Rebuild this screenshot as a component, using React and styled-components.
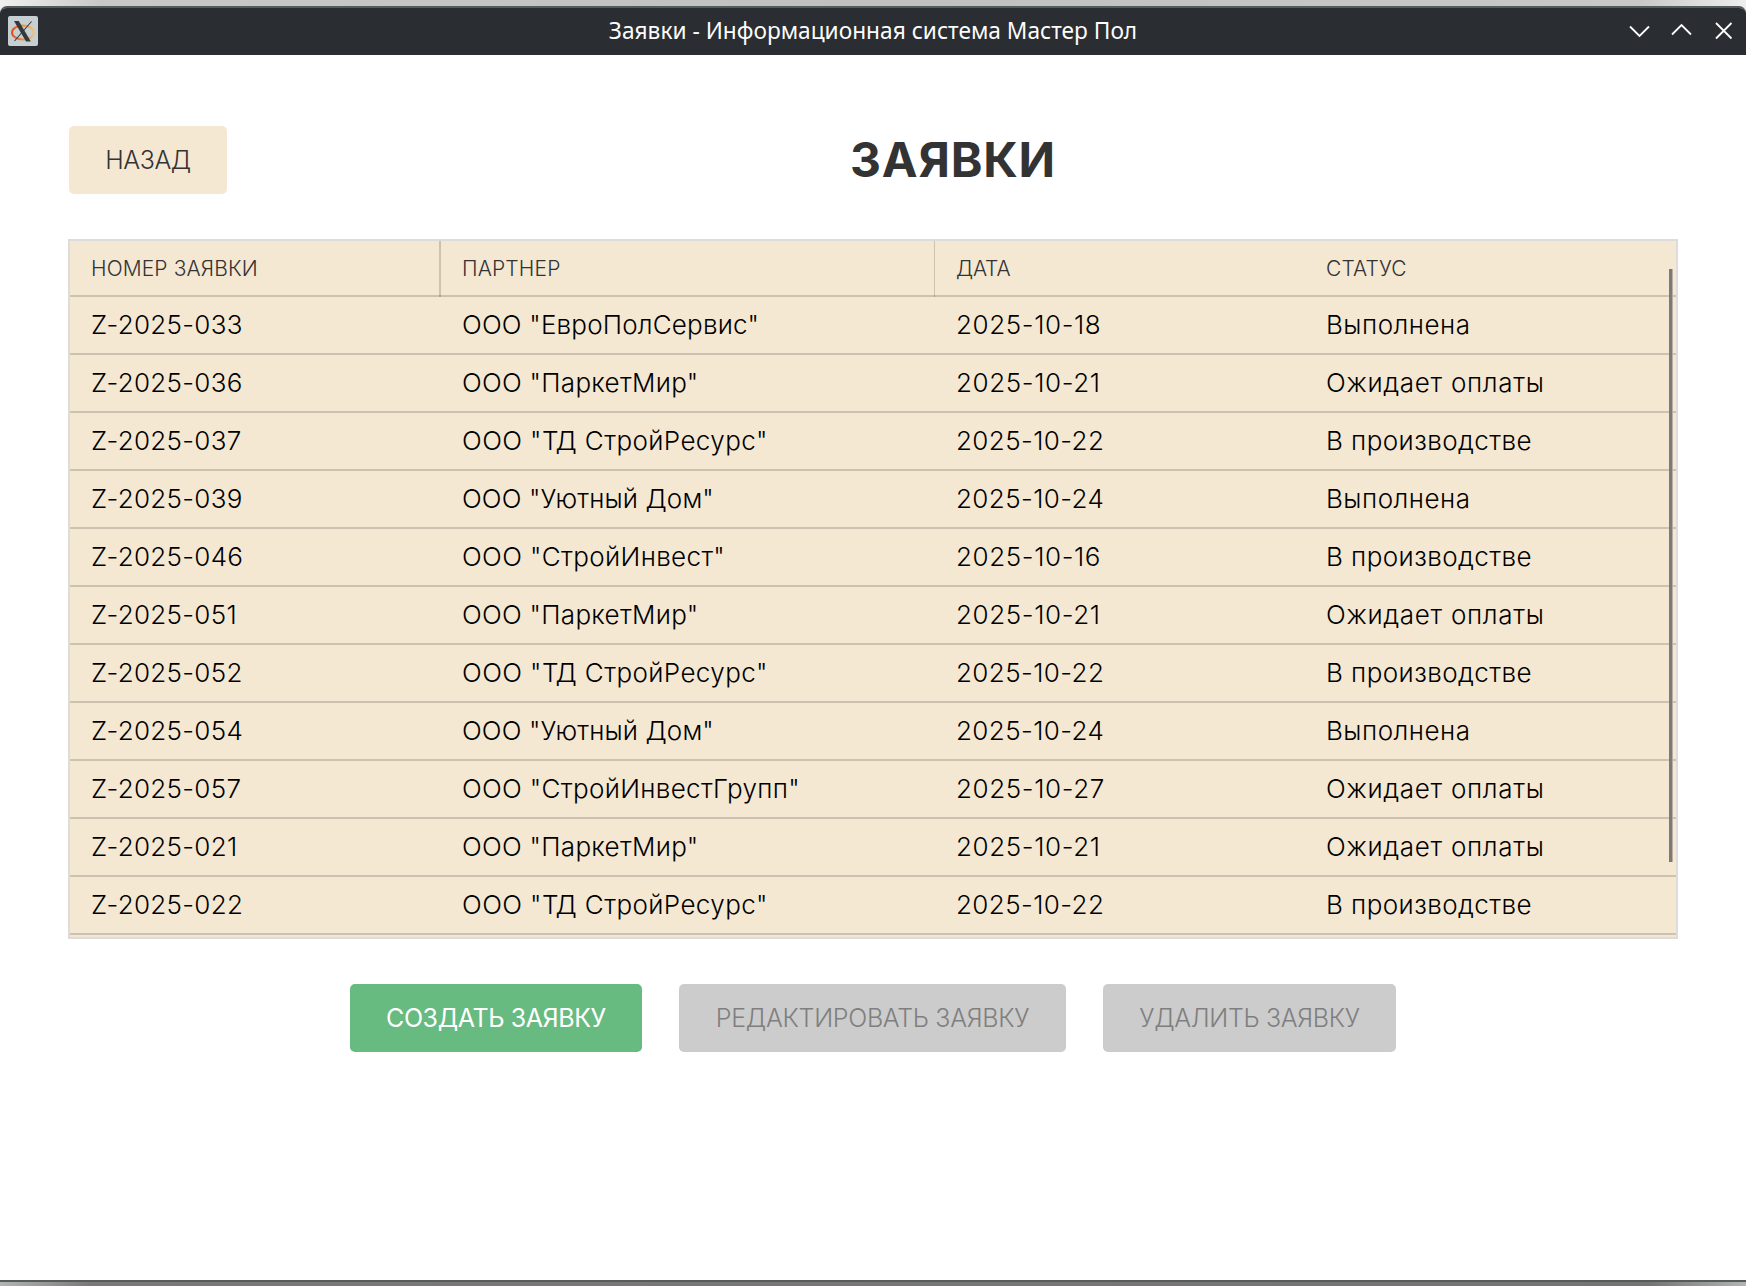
import React from 'react';
import styled, { createGlobalStyle } from 'styled-components';

const GlobalStyle = createGlobalStyle`
  * { box-sizing: border-box; }
  body { margin: 0; background: #bcbcbc; font-family: Inter, "Liberation Sans", sans-serif; }
`;

const Desktop = styled.div`
  width: 1746px;
  height: 1286px;
  padding: 6px 0 4px;
  overflow: hidden;
  background:
    linear-gradient(90deg, #b4b4b4 0, #7c7878 90px, #767373 1650px, #b4b4b4 100%) bottom / 100% 8px no-repeat,
    linear-gradient(90deg, #f0f0f0 0, #c8c8c8 100px, #c0c0c0 50%, #c8c8c8 1640px, #eeeeee 100%);
`;

const Window = styled.div`
  height: 1276px;
  display: flex;
  flex-direction: column;
  background: #fff;
  border-top: 2px solid #535b5d;
  border-bottom: 2px solid #535b5d;
  border-radius: 7px 7px 0 0;
  overflow: hidden;
`;

const TitleBar = styled.header`
  height: 47px;
  flex: none;
  display: grid;
  grid-template-columns: 140px 1fr 140px;
  align-items: center;
  background: #2a2d32;
  color: #fcfcfc;
`;

const AppIcon = styled.svg`
  margin: 0 0 2px 8px;
  width: 30px;
  height: 30px;
  display: block;
`;

const WindowTitle = styled.div`
  padding-bottom: 2px;
  text-align: center;
  font: 400 22.7px/30px "Noto Sans", sans-serif;
  white-space: nowrap;
`;

const WindowControls = styled.svg`
  width: 140px;
  height: 47px;
  display: block;
  fill: none;
  stroke: #fcfcfc;
  stroke-width: 1.8;
`;

const Content = styled.main`
  flex: 1;
  padding: 71px 68px 0;
  display: flex;
  flex-direction: column;
`;

const PageHead = styled.div`
  height: 68px;
  padding-left: 1px;
  display: flex;
  align-items: center;
`;

const Title = styled.h1`
  flex: 1;
  margin: 0;
  padding-left: 1px;
  text-align: center;
  font-size: 48px;
  line-height: 68px;
  font-weight: 700;
  letter-spacing: 0.8px;
  color: #333;
`;

const Button = styled.button`
  width: ${(p) => p.$width}px;
  height: 68px;
  padding: 0;
  border: 0;
  border-radius: 5px;
  font: ${(p) => p.$weight || 300} 25px/68px Inter, sans-serif;
  letter-spacing: ${(p) => p.$spacing || 0}px;
  white-space: nowrap;
  background: ${(p) => p.$bg};
  color: ${(p) => p.$color};
`;

const Table = styled.section`
  position: relative;
  margin-top: 45px;
  height: 700px;
  border: 2px solid #dcdcdc;
  background: #f4e8d3;
  overflow: hidden;
`;

const Row = styled.div`
  display: grid;
  grid-template-columns: 371px 494px 370px 371px;
  height: 58px;
  border-bottom: 2px solid rgba(0, 0, 0, 0.16);
  font-weight: 300;
  font-size: 26px;
  line-height: 56px;
  color: #000;
`;

const HeadRow = styled(Row)`
  height: 56px;
  font-size: 21px;
  line-height: 55px;
  color: #333;
`;

const Cell = styled.div`
  padding-left: 21px;
  margin-bottom: -2px;
  white-space: nowrap;
  letter-spacing: ${(p) => p.$spacing}px;
  border-right: ${(p) => p.$rule || 0}px solid rgba(0, 0, 0, 0.16);
`;

const ScrollThumb = styled.div`
  position: absolute;
  top: 28px;
  right: 3px;
  width: 4px;
  height: 593px;
  background: #7d7979;
  border-right: 1px solid #b9b0a3;
`;

const Actions = styled.div`
  margin-top: 45px;
  display: flex;
  justify-content: center;
  gap: 37px;
`;

const tracking = {
  'ООО "ЕвроПолСервис"': 0.19,
  'ООО "ПаркетМир"': 0.28,
  'ООО "ТД СтройРесурс"': 0.4,
  'ООО "Уютный Дом"': 0.12,
  'ООО "СтройИнвест"': 0.36,
  'ООО "СтройИнвестГрупп"': 0.33,
  '2025-10-22': 0.4,
  '2025-10-24': 0.4,
  'Выполнена': 0.48,
  'Ожидает оплаты': 0.7,
  'В производстве': 0.43,
};

const spacingOf = (text) => {
  if (text in tracking) return tracking[text];
  return text.startsWith('Z') ? 0.3 : 0.6;
};

const orders = [
  ['Z-2025-033', 'ООО "ЕвроПолСервис"', '2025-10-18', 'Выполнена'],
  ['Z-2025-036', 'ООО "ПаркетМир"', '2025-10-21', 'Ожидает оплаты'],
  ['Z-2025-037', 'ООО "ТД СтройРесурс"', '2025-10-22', 'В производстве'],
  ['Z-2025-039', 'ООО "Уютный Дом"', '2025-10-24', 'Выполнена'],
  ['Z-2025-046', 'ООО "СтройИнвест"', '2025-10-16', 'В производстве'],
  ['Z-2025-051', 'ООО "ПаркетМир"', '2025-10-21', 'Ожидает оплаты'],
  ['Z-2025-052', 'ООО "ТД СтройРесурс"', '2025-10-22', 'В производстве'],
  ['Z-2025-054', 'ООО "Уютный Дом"', '2025-10-24', 'Выполнена'],
  ['Z-2025-057', 'ООО "СтройИнвестГрупп"', '2025-10-27', 'Ожидает оплаты'],
  ['Z-2025-021', 'ООО "ПаркетМир"', '2025-10-21', 'Ожидает оплаты'],
  ['Z-2025-022', 'ООО "ТД СтройРесурс"', '2025-10-22', 'В производстве'],
];

function XIcon() {
  return (
    <AppIcon viewBox="0 0 30 30">
      <defs>
        <linearGradient id="ring" x1="0" x2="1">
          <stop offset="0" stopColor="#ee4a14" />
          <stop offset="0.45" stopColor="#f08a35" />
          <stop offset="1" stopColor="#eec27c" />
        </linearGradient>
      </defs>
      <rect width="30" height="30" rx="2" fill="#c6cfd2" />
      <ellipse cx="15" cy="16.5" rx="11" ry="7" fill="none" stroke="url(#ring)" strokeWidth="2" />
      <path d="M23.500 5.500L6.500 25" stroke="#34393c" strokeWidth="1.1" />
      <path d="M6 5H10.800L22.800 25.500H18Z" fill="#34393c" />
    </AppIcon>
  );
}

export default function App() {
  return (
    <Desktop>
      <GlobalStyle />
      <Window>
        <TitleBar>
          <XIcon />
          <WindowTitle>Заявки - Информационная система Мастер Пол</WindowTitle>
          <WindowControls viewBox="0 0 140 47">
            <path d="M24 18.500l9.500 9.500 9.500-9.500M66 26.500l9.500-9.500 9.500 9.500M110 15l15.500 15.500M125.500 15L110 30.500" />
          </WindowControls>
        </TitleBar>
        <Content>
          <PageHead>
            <Button $width={158} $bg="#f4e8d3" $color="#333" $spacing={-0.4}>НАЗАД</Button>
            <Title>ЗАЯВКИ</Title>
          </PageHead>
          <Table>
            <HeadRow>
              <Cell $rule={2} $spacing={0.12}>НОМЕР ЗАЯВКИ</Cell>
              <Cell $rule={1} $spacing={0.15}>ПАРТНЕР</Cell>
              <Cell $spacing={-0.2}>ДАТА</Cell>
              <Cell $spacing={0.12}>СТАТУС</Cell>
            </HeadRow>
            {orders.map((cells) => (
              <Row key={cells[0]}>
                {cells.map((text, i) => <Cell key={i} $spacing={spacingOf(text)}>{text}</Cell>)}
              </Row>
            ))}
            <ScrollThumb />
          </Table>
          <Actions>
            <Button $width={292} $bg="#67ba80" $color="#fff" $weight={400} $spacing={-0.4}>СОЗДАТЬ ЗАЯВКУ</Button>
            <Button $width={387} $bg="#ccc" $color="#7f7f7f" $spacing={-0.3}>РЕДАКТИРОВАТЬ ЗАЯВКУ</Button>
            <Button $width={293} $bg="#ccc" $color="#7f7f7f" $spacing={-0.32}>УДАЛИТЬ ЗАЯВКУ</Button>
          </Actions>
        </Content>
      </Window>
    </Desktop>
  );
}
